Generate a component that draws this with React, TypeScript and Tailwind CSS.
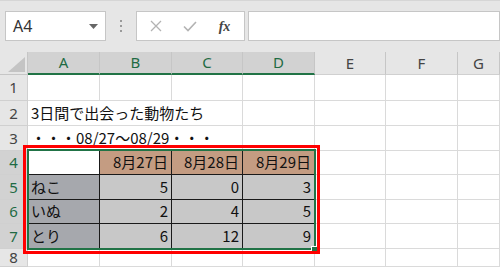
import React from 'react';

const cols = ['A', 'B', 'C', 'D', 'E', 'F', 'G'];
const rowNums = [1, 2, 3, 4, 5, 6, 7, 8];

type Cell = { text?: string; bg?: string; align?: 'left' | 'right'; noRight?: boolean; table?: boolean };

const data: Record<string, Cell> = {
  A2: { text: '3日間で出会った動物たち', noRight: true },
  B2: { noRight: true },
  A3: { text: '・・・08/27～08/29・・・', noRight: true },
  B3: { noRight: true },
  A4: { table: true, bg: 'bg-white' },
  B4: { text: '8月27日', align: 'right', table: true, bg: 'bg-[#c49c82]' },
  C4: { text: '8月28日', align: 'right', table: true, bg: 'bg-[#c49c82]' },
  D4: { text: '8月29日', align: 'right', table: true, bg: 'bg-[#c49c82]' },
  A5: { text: 'ねこ', table: true, bg: 'bg-[#a6a8ad]' },
  B5: { text: '5', align: 'right', table: true, bg: 'bg-[#c8c8c8]' },
  C5: { text: '0', align: 'right', table: true, bg: 'bg-[#c8c8c8]' },
  D5: { text: '3', align: 'right', table: true, bg: 'bg-[#c8c8c8]' },
  A6: { text: 'いぬ', table: true, bg: 'bg-[#a6a8ad]' },
  B6: { text: '2', align: 'right', table: true, bg: 'bg-[#c8c8c8]' },
  C6: { text: '4', align: 'right', table: true, bg: 'bg-[#c8c8c8]' },
  D6: { text: '5', align: 'right', table: true, bg: 'bg-[#c8c8c8]' },
  A7: { text: 'とり', table: true, bg: 'bg-[#a6a8ad]' },
  B7: { text: '6', align: 'right', table: true, bg: 'bg-[#c8c8c8]' },
  C7: { text: '12', align: 'right', table: true, bg: 'bg-[#c8c8c8]' },
  D7: { text: '9', align: 'right', table: true, bg: 'bg-[#c8c8c8]' },
};

const font = { fontFamily: '"Noto Sans CJK JP", "Noto Sans", sans-serif' };

export default function App() {
  return (
    <div className="relative w-[500px] h-[267px] overflow-hidden bg-white" style={{ fontFamily: '"Noto Sans", "Liberation Sans", sans-serif' }}>
      {/* Toolbar */}
      <div className="h-[52px] bg-[#e6e6e6] border-t border-[#d6d6d6] flex items-start pt-[10px] pl-[5px]">
        <div className="w-[101px] h-[30px] bg-white border border-[#c6c6c6] flex items-center justify-between pl-[7px] pr-[7px]">
          <span className="text-[16px] text-[#333]">A4</span>
          <svg width="9" height="5" viewBox="0 0 9 5"><path d="M0 0h9L4.5 5z" fill="#666" /></svg>
        </div>
        <div className="w-[30px] h-[30px] flex flex-col items-center justify-center gap-[3px]">
          <span className="w-[2px] h-[2px] bg-[#9a9a9a]" />
          <span className="w-[2px] h-[2px] bg-[#9a9a9a]" />
          <span className="w-[2px] h-[2px] bg-[#9a9a9a]" />
        </div>
        <div className="w-[109px] h-[30px] bg-white border border-[#c6c6c6] flex items-center">
          <div className="w-[38px] flex justify-center">
            <svg width="12" height="12" viewBox="0 0 12 12"><path d="M1 1l10 10M11 1L1 11" stroke="#b3b3b3" strokeWidth="1.3" /></svg>
          </div>
          <div className="w-[30px] flex justify-center">
            <svg width="14" height="11" viewBox="0 0 14 11"><path d="M1 5.5l4 4L13 1" stroke="#b3b3b3" strokeWidth="1.6" fill="none" /></svg>
          </div>
          <div className="flex-1 flex justify-center">
            <span className="text-[14px] italic font-bold text-[#444]" style={{ fontFamily: '"Liberation Serif", serif' }}>fx</span>
          </div>
        </div>
        <div className="flex-1 ml-[3px] h-[30px] bg-white border border-[#c6c6c6]" />
      </div>

      {/* Sheet grid */}
      <div className="grid grid-cols-[28px_72px_72px_71px_72px_71px_72px_1fr] grid-rows-[23px_26px_25px_25px_24px_25px_24px_25px_18px]">
        <div className="bg-[#e6e6e6] border-r border-b border-[#c6c6c6] relative">
          <svg className="absolute left-[8px] top-[5px]" width="17" height="15" viewBox="0 0 17 15"><path d="M17 0V15H0z" fill="#c4c4c4" /></svg>
        </div>
        {cols.map((c, i) => {
          const sel = i < 4;
          return (
            <div
              key={c}
              className={`flex items-center justify-center text-[15px] border-r border-[#c6c6c6] ${
                sel ? 'bg-[#d2d2d2] text-[#1f6b44] border-b-2 border-b-[#217346]' : 'bg-[#e6e6e6] text-[#444] border-b border-b-[#d0d0d0]'
              }`}
            >
              {c}
            </div>
          );
        })}
        {rowNums.map((r) => {
          const selRow = r >= 4 && r <= 7;
          return (
            <React.Fragment key={r}>
              <div
                className={`flex items-center justify-center text-[15px] border-r border-b border-[#d0d0d0] ${
                  selRow ? 'bg-[#d2d2d2] text-[#1f6b44]' : 'bg-[#e6e6e6] text-[#444]'
                }`}
              >
                {r}
              </div>
              {cols.map((c) => {
                const cell = data[c + r] || {};
                const aboveTable = r === 3 && ['A', 'B', 'C', 'D'].includes(c);
                const borders = cell.table
                  ? 'border-r border-b border-[#1a1a1a]'
                  : `border-b ${aboveTable ? 'border-b-[#1a1a1a]' : 'border-b-[#dadada]'} ${cell.noRight ? '' : 'border-r border-r-[#dadada]'}`;
                return (
                  <div
                    key={c}
                    className={`relative flex items-center text-[15px] text-[#111] whitespace-nowrap overflow-visible z-0 ${
                      cell.bg || ''
                    } ${borders} ${cell.align === 'right' ? 'justify-end pr-[3px]' : 'pl-[3px]'}`}
                    style={font}
                  >
                    {cell.text}
                  </div>
                );
              })}
            </React.Fragment>
          );
        })}
      </div>

      {/* Selection border + fill handle */}
      <div className="absolute left-[27px] top-[149px] w-[289px] h-[101px] border-2 border-[#217346] pointer-events-none" />
      <div className="absolute left-[311px] top-[246px] w-[7px] h-[7px] bg-[#217346] border border-white" />
      {/* Red highlight frame */}
      <div className="absolute left-[23px] top-[145px] w-[297px] h-[109px] border-[3px] border-[#ff0000] pointer-events-none" />
    </div>
  );
}
